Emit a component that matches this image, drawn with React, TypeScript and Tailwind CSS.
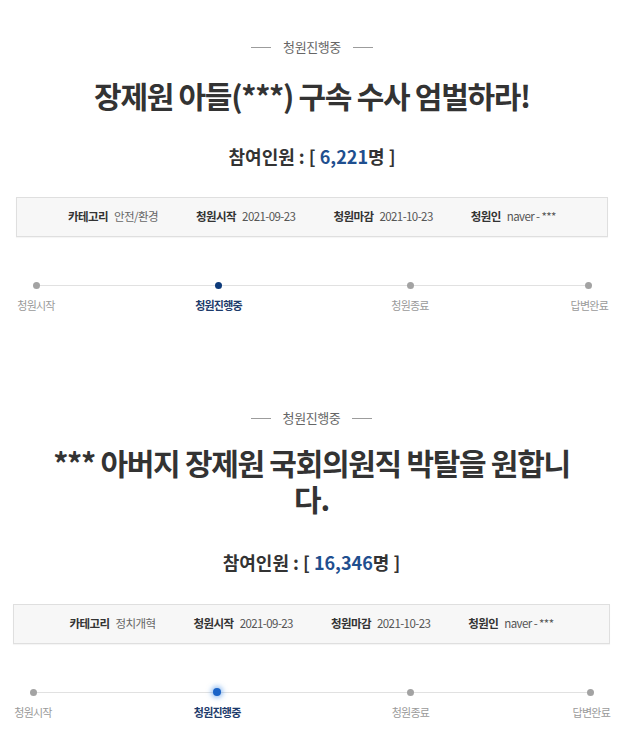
type Petition = {
  title: string[];
  count: string;
  category: string;
  start: string;
  end: string;
  author: string;
  glow: boolean;
  wrap: string;
  titleGap: string;
  countGap: string;
  boxGap: string;
};

const petitions: Petition[] = [
  {
    title: ['장제원 아들(***) 구속 수사 엄벌하라!'],
    count: '6,221',
    category: '안전/환경',
    start: '2021-09-23',
    end: '2021-10-23',
    author: 'naver - ***',
    glow: false,
    wrap: 'ml-[16px] w-[592px] pt-[37px]',
    titleGap: 'mt-[20px]',
    countGap: 'mt-[30px]',
    boxGap: 'mt-[28px]',
  },
  {
    title: ['*** 아버지 장제원 국회의원직 박탈을 원합니', '다.'],
    count: '16,346',
    category: '정치개혁',
    start: '2021-09-23',
    end: '2021-10-23',
    author: 'naver - ***',
    glow: true,
    wrap: 'ml-[13px] w-[597px] mt-[95px]',
    titleGap: 'mt-[16px]',
    countGap: 'mt-[33px]',
    boxGap: 'mt-[29px]',
  },
];

const stages = ['청원시작', '청원진행중', '청원종료', '답변완료'];
const stageCols = ['col-start-1', 'col-start-3', 'col-start-5', 'col-start-7'];

function Progress({ glow }: { glow: boolean }) {
  return (
    <div className="grid grid-cols-[40px_138fr_49px_147fr_40px_125fr_53px] grid-rows-[10px_auto] mt-[43px]">
      {/* track runs from the first dot to the last */}
      <div className="row-start-1 col-start-1 col-end-8 self-center h-px bg-[#e1e1e1] ml-[20px] mr-[20px]" />
      {stages.map((s, i) => (
        <span
          key={s}
          className={`row-start-1 ${stageCols[i]} self-center rounded-full ${
            i === 3 ? 'justify-self-end mr-[16px]' : 'justify-self-center'
          } ${
            i === 1
              ? glow
                ? 'w-[8px] h-[8px] bg-[#1a63c7] shadow-[0_0_5px_2px_rgba(66,140,230,0.55)]'
                : 'w-[7px] h-[7px] bg-[#0d3a7a]'
              : 'w-[7px] h-[7px] bg-[#a3a3a3]'
          }`}
        />
      ))}
      {stages.map((s, i) => (
        <span
          key={s + '-label'}
          className={`row-start-2 ${stageCols[i]} ${
            i === 3 ? 'justify-self-end' : 'justify-self-center'
          } whitespace-nowrap mt-[7px] text-[11px] leading-[16px] tracking-[-0.07em] ${
            i === 1 ? 'font-bold text-[#1d3b6b]' : 'text-[#9a9a9a]'
          }`}
        >
          {s}
        </span>
      ))}
    </div>
  );
}

function PetitionBlock({ p }: { p: Petition }) {
  return (
    <section className={p.wrap}>
      <div className="flex items-center justify-center gap-[12px]">
        <span className="w-[20px] h-px bg-[#9c9c9c]" />
        <span className="text-[13px] leading-[20px] text-[#666] tracking-[-0.03em]">청원진행중</span>
        <span className="w-[20px] h-px bg-[#9c9c9c]" />
      </div>

      <h1
        className={`${p.titleGap} text-center text-[30px] leading-[36px] font-bold text-[#333] tracking-[-0.043em]`}
      >
        {p.title.map((line, i) => (
          <span key={i} className="block">
            {line}
          </span>
        ))}
      </h1>

      <p className={`${p.countGap} text-center text-[18px] leading-[26px] font-bold text-[#333]`}>
        참여인원 : [ <span className="text-[#1f4f8f]">{p.count}</span>명 ]
      </p>

      <div
        className={`${p.boxGap} h-[40px] bg-[#f7f7f7] border border-[#dfdfdf] shadow-[0_1px_1px_rgba(0,0,0,0.04)] flex items-center justify-center gap-[38px] text-[11.5px] tracking-[-0.05em]`}
      >
        <div className="flex items-center gap-[6px]">
          <span className="font-bold text-[#333]">카테고리</span>
          <span className="text-[#666]">{p.category}</span>
        </div>
        <div className="flex items-center gap-[6px]">
          <span className="font-bold text-[#333]">청원시작</span>
          <span className="text-[#555]">{p.start}</span>
        </div>
        <div className="flex items-center gap-[6px]">
          <span className="font-bold text-[#333]">청원마감</span>
          <span className="text-[#555]">{p.end}</span>
        </div>
        <div className="flex items-center gap-[6px]">
          <span className="font-bold text-[#333]">청원인</span>
          <span className="text-[#555]">{p.author}</span>
        </div>
      </div>

      <Progress glow={p.glow} />
    </section>
  );
}

export default function App() {
  return (
    <div className="w-[630px] h-[736px] bg-white overflow-hidden font-['Noto_Sans_CJK_KR',sans-serif]">
      {petitions.map((p, i) => (
        <PetitionBlock key={i} p={p} />
      ))}
    </div>
  );
}
